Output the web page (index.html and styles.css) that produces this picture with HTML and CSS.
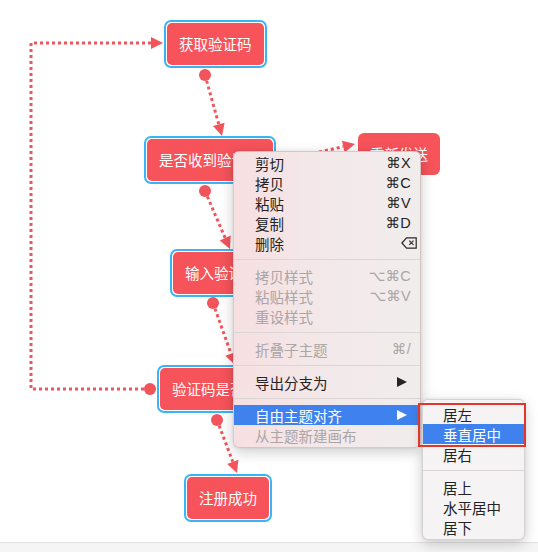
FILE: index.html
```html
<!DOCTYPE html>
<html lang="zh">
<head>
<meta charset="utf-8">
<title>Mind map</title>
<link rel="stylesheet" href="styles.css">
</head>
<body>
<div class="screen">
  <div class="canvas">
    <svg class="links" viewBox="0 0 538 542" width="538" height="542">
      <path class="link" d="M205 75 L218.8 124.4"/>
      <path class="link" d="M205 191 L225.2 238"/>
      <path class="link" d="M284 160 L343.3 146.6"/>
      <path class="link" d="M213 303 L231 353.7"/>
      <path class="link" d="M217 420 L232.8 461.8"/>
      <path class="link" d="M150 389 H31 V43 H151"/>
      <circle class="head" cx="205" cy="75" r="6"/>
      <circle class="head" cx="205" cy="191" r="6"/>
      <circle class="head" cx="284" cy="160" r="6"/>
      <circle class="head" cx="213" cy="303" r="6"/>
      <circle class="head" cx="217" cy="420" r="6"/>
      <circle class="head" cx="150" cy="389" r="6"/>
      <polygon class="head" points="222,136 213,126 224.6,122.8"/>
      <polygon class="head" points="230,249 219.7,240.4 230.7,235.6"/>
      <polygon class="head" points="355,144 344.6,152.5 342,140.8"/>
      <polygon class="head" points="235,365 225.3,355.7 236.6,351.7"/>
      <polygon class="head" points="237,473 227.2,463.9 238.4,459.7"/>
      <polygon class="head" points="163,43 151,37 151,49"/>
    </svg>

    <div class="node n1"><div class="node-body">获取验证码</div></div>
    <div class="node n2"><div class="node-body">是否收到验证码</div></div>
    <div class="node plain n3"><div class="node-body">重新发送</div></div>
    <div class="node n4"><div class="node-body">输入验证码</div></div>
    <div class="node n5"><div class="node-body">验证码是否正确</div></div>
    <div class="node n6"><div class="node-body">注册成功</div></div>

    <div class="menu">
      <div class="item"><span>剪切</span><span class="key">⌘X</span></div>
      <div class="item"><span>拷贝</span><span class="key">⌘C</span></div>
      <div class="item"><span>粘贴</span><span class="key">⌘V</span></div>
      <div class="item"><span>复制</span><span class="key">⌘D</span></div>
      <div class="item"><span>删除</span>
        <svg class="del" viewBox="0 0 16 12" width="16" height="12"><path d="M5.5 0.8 H15.2 V11.2 H5.5 L0.9 6 Z"/><path d="M8.3 3.6 L12.5 7.8 M12.5 3.6 L8.3 7.8"/></svg>
      </div>
      <div class="sep"></div>
      <div class="item disabled"><span>拷贝样式</span><span class="key">⌥⌘C</span></div>
      <div class="item disabled"><span>粘贴样式</span><span class="key">⌥⌘V</span></div>
      <div class="item disabled"><span>重设样式</span></div>
      <div class="sep"></div>
      <div class="item disabled"><span>折叠子主题</span><span class="key">⌘/</span></div>
      <div class="sep"></div>
      <div class="item"><span>导出分支为</span><svg class="arrow" viewBox="0 0 10 10" width="10" height="10"><polygon points="0,0 10,5 0,10"/></svg></div>
      <div class="sep"></div>
      <div class="item active"><span>自由主题对齐</span><svg class="arrow" viewBox="0 0 10 10" width="10" height="10"><polygon points="0,0 10,5 0,10"/></svg></div>
      <div class="item disabled"><span>从主题新建画布</span></div>
    </div>

    <div class="submenu">
      <div class="item"><span>居左</span></div>
      <div class="item active"><span>垂直居中</span></div>
      <div class="item"><span>居右</span></div>
      <div class="sep"></div>
      <div class="item"><span>居上</span></div>
      <div class="item"><span>水平居中</span></div>
      <div class="item"><span>居下</span></div>
    </div>

    <div class="mark"></div>
  </div>
  <div class="statusbar"></div>
</div>
</body>
</html>
```

FILE: styles.css
```css
* { box-sizing: border-box; }
html, body { margin: 0; padding: 0; }
body {
  width: 538px;
  height: 552px;
  overflow: hidden;
  background: #ffffff;
  font-family: "Noto Sans CJK SC", "Noto Sans", sans-serif;
}
.screen { display: flex; flex-direction: column; height: 552px; }
.canvas { position: relative; flex: none; height: 542px; }
.statusbar { flex: 1; border-top: 1px solid #e2e2e2; background: #f5f5f5; }

.links { position: absolute; left: 0; top: 0; }
.link {
  fill: none;
  stroke: #f2545b;
  stroke-width: 3;
  stroke-dasharray: 3 3;
  stroke-linejoin: round;
}
.head { fill: #f2545b; }

.node {
  position: absolute;
  border: 2px solid #3ab5f3;
  padding: 1px;
  border-radius: 7px;
  background: #fff;
}
.node-body {
  height: 42px;
  padding: 0 12px;
  background: #f6535a;
  color: #fff;
  border-radius: 5px;
  font-size: 14.5px;
  line-height: 42px;
  white-space: nowrap;
}
.node.plain { border: none; padding: 0; background: transparent; }
.node.plain .node-body { border-radius: 6px; }
.n1 { left: 164px; top: 20px; }
.n2 { left: 144px; top: 136px; }
.n3 { left: 358px; top: 133px; }
.n4 { left: 170px; top: 249px; }
.n5 { left: 157px; top: 365px; }
.n6 { left: 184px; top: 474px; }

.menu, .submenu {
  position: absolute;
  border: 1px solid rgba(0, 0, 0, 0.13);
  border-radius: 6px;
  box-shadow: 0 4px 14px rgba(0, 0, 0, 0.2), 0 0 3px rgba(0, 0, 0, 0.08);
  font-size: 14.5px;
  color: #232323;
  overflow: hidden;
}
.menu {
  left: 233px;
  top: 151px;
  width: 188px;
  padding: 1px 0 2px;
  background: linear-gradient(90deg, #f6dfe1 0%, #f3e8e9 45%, #f1eded 100%);
}
.submenu {
  left: 422px;
  top: 399px;
  width: 103px;
  padding: 4px 0 2px;
  background: #f5f3f3;
}
.item {
  display: flex;
  align-items: center;
  justify-content: space-between;
  height: 20px;
  padding: 0 9px 0 21px;
  white-space: nowrap;
}
.submenu .item { padding: 0 8px 0 20px; }
.item.disabled { color: #aaa5a6; }
.item.active { background: #3f82ee; color: #fff; }
.sep { height: 1px; margin: 6px 0; background: #dbd5d6; }
.key {
  font-family: "Liberation Sans", "DejaVu Sans", sans-serif;
  font-size: 14.5px;
  letter-spacing: 0.3px;
}
.del { margin-right: -6px; fill: none; stroke: #2a2a2a; stroke-width: 1.2; }
.arrow { margin-right: 4px; fill: #262626; }
.item.active .arrow { fill: #fff; }

.mark {
  position: absolute;
  left: 418px;
  top: 403px;
  width: 108px;
  height: 44px;
  border: 2px solid #e2352c;
}
```
